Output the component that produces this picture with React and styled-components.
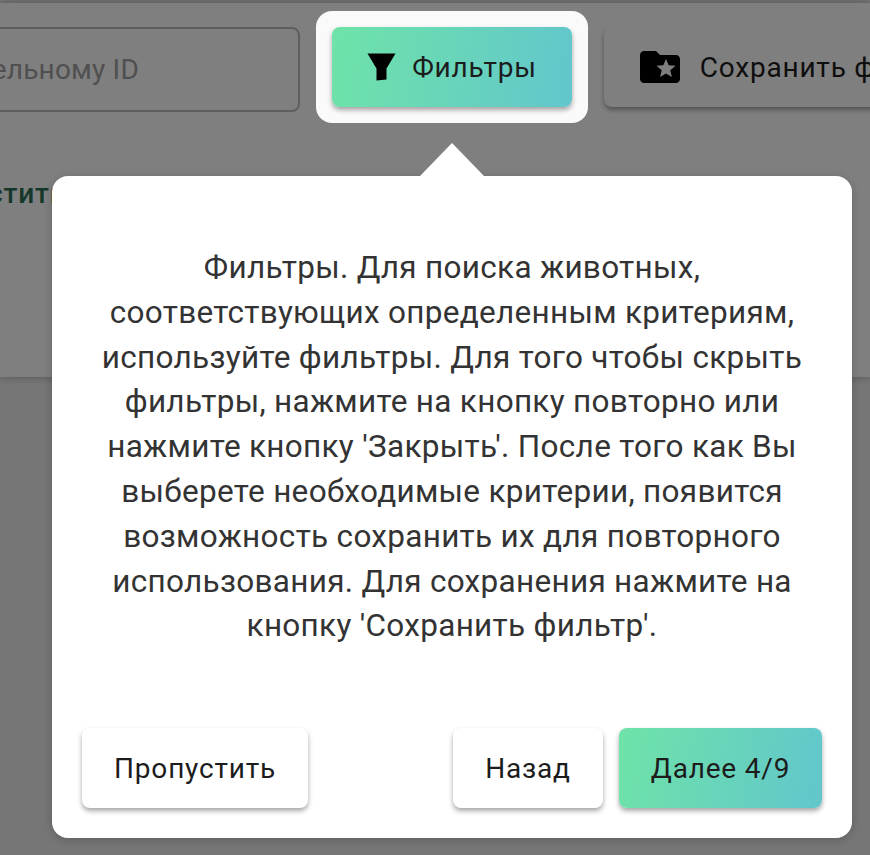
import React from "react";
import styled, { createGlobalStyle } from "styled-components";
import { MdFolderSpecial } from "react-icons/md";

const Global = createGlobalStyle`
  html, body { margin: 0; padding: 0; background: #ececec; }
  body { font-family: Roboto, "Noto Sans", sans-serif; }
  * { box-sizing: border-box; }
`;

const Page = styled.div`
  position: relative;
  width: 870px;
  height: 855px;
  overflow: hidden;
  background: #ececec;
  padding-top: 3px;
`;

const Panel = styled.section`
  height: 374px;
  background: #fff;
  box-shadow: 0 0 8px rgba(0, 0, 0, 0.3);
  overflow: hidden;
`;

const Toolbar = styled.div`
  display: flex;
  align-items: flex-start;
  gap: 16px;
  padding-top: 8px;
  width: 1200px;
`;

const SearchField = styled.div`
  flex: none;
  width: 600px;
  height: 85px;
  margin-top: 16px;
  margin-left: -300px;
  border: 2px solid #bdbdbd;
  border-radius: 8px;
  font-size: 28px;
  letter-spacing: 0.2px;
  color: #a0a0a0;
  display: flex;
  align-items: center;
  justify-content: flex-end;
`;

const SearchText = styled.span`
  margin-right: 159px;
  white-space: nowrap;
`;

const Spotlight = styled.div`
  position: relative;
  z-index: 2;
  flex: none;
  padding: 16px;
  background: #fafafa;
  border-radius: 16px;
`;

const ActionButton = styled.button`
  display: flex;
  align-items: center;
  justify-content: center;
  flex: none;
  gap: ${(p) => p.$gap || 15}px;
  width: ${(p) => p.$width}px;
  height: 80px;
  border: 0;
  border-radius: 8px;
  padding: 0;
  font-family: Roboto, sans-serif;
  font-size: 28px;
  letter-spacing: 0.8px;
  color: #1c1c1c;
  background: ${(p) =>
    p.$accent ? "linear-gradient(100deg, #6fe3a8, #62c6cc)" : "#fff"};
  box-shadow: 0 3px 5px rgba(0, 0, 0, 0.35);
`;

const SaveSlot = styled.div`
  flex: none;
  margin-top: 16px;
`;

const Link = styled.div`
  margin: 54px 0 0 -65px;
  font-size: 28px;
  font-weight: 500;
  letter-spacing: 0.8px;
  color: #2a6e54;
`;

const Overlay = styled.div`
  position: absolute;
  inset: 0;
  z-index: 1;
  background: rgba(0, 0, 0, 0.5);
`;

const Popover = styled.div`
  position: absolute;
  z-index: 3;
  left: 52px;
  top: 176px;
  width: 800px;
  height: 662px;
  background: #fff;
  border-radius: 16px;
  padding: 70px 30px 30px;
  display: flex;
  flex-direction: column;
  box-shadow: 0 2px 10px rgba(0, 0, 0, 0.2);

  &::before {
    content: "";
    position: absolute;
    left: 368px;
    top: -33px;
    border-left: 32px solid transparent;
    border-right: 32px solid transparent;
    border-bottom: 33px solid #fff;
  }
`;

const Message = styled.p`
  flex: 1;
  margin: 0;
  font-size: 31.5px;
  line-height: 44.8px;
  letter-spacing: 0.3px;
  text-align: center;
  color: #333;
`;

const Footer = styled.div`
  display: flex;
  align-items: center;
  gap: 16px;
`;

const Spacer = styled.div`
  flex: 1;
`;

const FilterIcon = () => (
  <svg width="30" height="28" viewBox="0 0 30 28" aria-hidden="true">
    <path d="M0.500 0.500h28L19.500 15.500V26.500l-10 1V15.500z" fill="#000" />
  </svg>
);

export default function App() {
  return (
    <Page>
      <Global />
      <Panel>
        <Toolbar>
          <SearchField>
            <SearchText>Поиск по дополнительному ID</SearchText>
          </SearchField>
          <Spotlight>
            <ActionButton $accent $width={240}>
              <FilterIcon />
              Фильтры
            </ActionButton>
          </Spotlight>
          <SaveSlot>
            <ActionButton $width={383} $gap={16}>
              <MdFolderSpecial size={48} color="#000" />
              Сохранить фильтр
            </ActionButton>
          </SaveSlot>
        </Toolbar>
        <Link>Очистить</Link>
      </Panel>
      <Overlay />
      <Popover>
        <Message>
          Фильтры. Для поиска животных, соответствующих определенным критериям,
          используйте фильтры. Для того чтобы скрыть фильтры, нажмите на кнопку
          повторно или нажмите кнопку 'Закрыть'. После того как Вы выберете
          необходимые критерии, появится возможность сохранить их для повторного
          использования. Для сохранения нажмите на кнопку 'Сохранить фильтр'.
        </Message>
        <Footer>
          <ActionButton $width={226}>Пропустить</ActionButton>
          <Spacer />
          <ActionButton $width={150}>Назад</ActionButton>
          <ActionButton $accent $width={203}>Далее 4/9</ActionButton>
        </Footer>
      </Popover>
    </Page>
  );
}
